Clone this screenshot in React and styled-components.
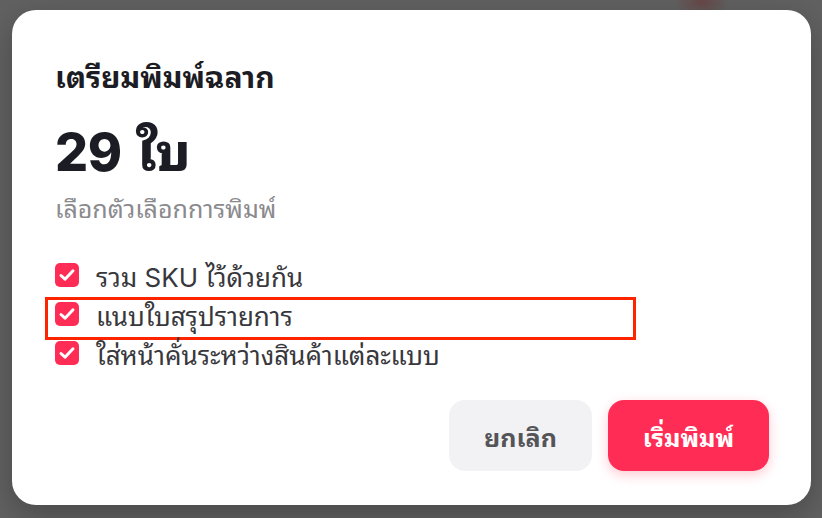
import React from "react";
import styled, { createGlobalStyle } from "styled-components";

const Global = createGlobalStyle`
  html, body { margin: 0; padding: 0; }
  body {
    background: #616161;
    background-image: radial-gradient(ellipse 28px 14px at 702px 2px, rgba(110, 50, 50, 0.55), rgba(97,97,97,0));
    font-family: "Inter", "Noto Sans Thai Looped", "Loma", "Garuda", "Noto Sans Thai", "Noto Sans", sans-serif;
  }
  * { box-sizing: border-box; }
`;

const Backdrop = styled.div`
  width: 822px;
  height: 518px;
  padding: 10px 11px 13px 12px;
  display: flex;
`;

const Modal = styled.div`
  flex: 1;
  background: #ffffff;
  border-radius: 24px;
  box-shadow: 0 10px 30px rgba(0, 0, 0, 0.25);
  padding: 47px 42px 34px 43px;
  display: flex;
  flex-direction: column;
`;

const Title = styled.h2`
  margin: 0;
  font-size: 30px;
  line-height: 40px;
  font-weight: 700;
  color: #1c1c24;
`;

const Count = styled.div`
  margin-top: 26px;
  font-size: 52px;
  line-height: 60px;
  font-weight: 800;
  color: #1c1c24;
  letter-spacing: -0.5px;
  word-spacing: 4px;
`;

const Sub = styled.div`
  margin-top: 10px;
  font-size: 25px;
  line-height: 32px;
  color: #8a8a8e;
`;

const Options = styled.div`
  margin-top: 38px;
  display: flex;
  flex-direction: column;
  gap: 15px;
`;

const Row = styled.label`
  position: relative;
  display: flex;
  align-items: center;
  gap: 17px;
  height: 24px;
  font-size: 26px;
  color: #38383c;
  &::after {
    content: "";
    display: ${(p) => (p.$highlight ? "block" : "none")};
    position: absolute;
    left: -10px;
    top: -5px;
    width: 585px;
    height: 37px;
    border: 3px solid #ff2400;
    pointer-events: none;
  }
`;

const Box = styled.span`
  width: 24px;
  height: 24px;
  border-radius: 5px;
  background: #ff2d55;
  display: flex;
  align-items: center;
  justify-content: center;
  flex-shrink: 0;
`;

const Footer = styled.div`
  margin-top: auto;
  display: flex;
  justify-content: flex-end;
  gap: 16px;
`;

const Button = styled.button`
  height: 71px;
  width: ${(p) => p.$w}px;
  border: none;
  border-radius: 16px;
  font-family: inherit;
  font-size: 25px;
  font-weight: 700;
  background: ${(p) => (p.$primary ? "#ff2d55" : "#f2f2f4")};
  color: ${(p) => (p.$primary ? "#ffffff" : "#555558")};
  box-shadow: ${(p) => (p.$primary ? "0 4px 12px rgba(255, 45, 85, 0.25)" : "none")};
`;

const Check = () => (
  <svg width="18" height="18" viewBox="0 0 18 18" fill="none">
    <path d="M3 9.5 L7 13.2 L15 4.8" stroke="#fff" strokeWidth="3" strokeLinecap="round" strokeLinejoin="round" />
  </svg>
);

const options = [
  "รวม SKU ไว้ด้วยกัน",
  "แนบใบสรุปรายการ",
  "ใส่หน้าคั่นระหว่างสินค้าแต่ละแบบ",
];

export default function App() {
  return (
    <>
      <Global />
      <Backdrop>
        <Modal>
          <Title>เตรียมพิมพ์ฉลาก</Title>
          <Count>29 ใบ</Count>
          <Sub>เลือกตัวเลือกการพิมพ์</Sub>
          <Options>
            {options.map((o, i) => (
              <Row key={o} $highlight={i === 1}>
                <Box>
                  <Check />
                </Box>
                {o}
              </Row>
            ))}
          </Options>
          <Footer>
            <Button $w={143}>ยกเลิก</Button>
            <Button $w={161} $primary>เริ่มพิมพ์</Button>
          </Footer>
        </Modal>
      </Backdrop>
    </>
  );
}
